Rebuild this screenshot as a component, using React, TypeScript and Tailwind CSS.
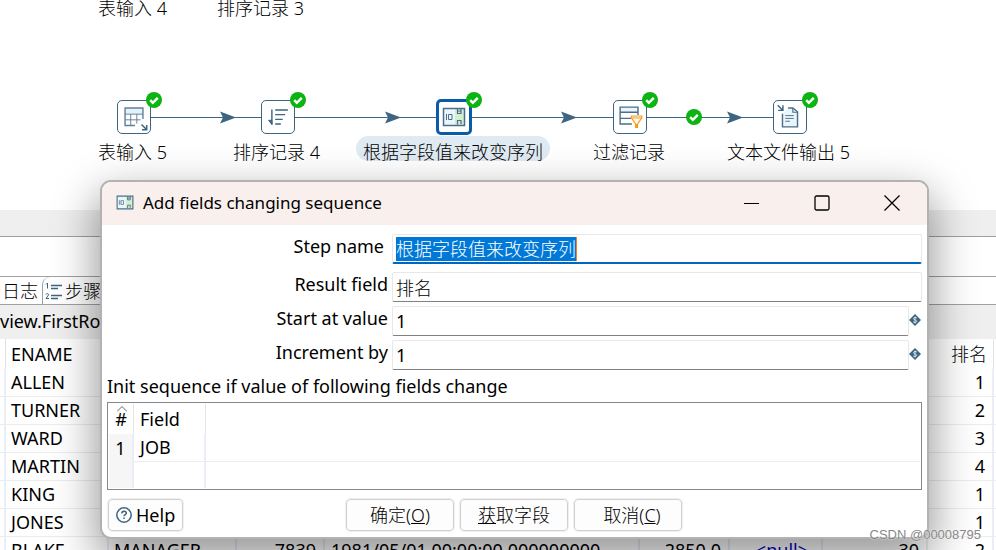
import React from "react";

const FONT = "font-['Noto_Sans','Noto_Sans_CJK_SC',sans-serif]";

function Check({ className }: { className?: string }) {
  return (
    <svg viewBox="0 0 16 16" className={`h-4 w-4 ${className ?? ""}`}>
      <circle cx="8" cy="8" r="8" fill="#0db312" />
      <path d="M4.2 8.2 6.8 10.8 11.8 5.8" fill="none" stroke="#fff" strokeWidth="2.4" />
    </svg>
  );
}

function TableInputIcon() {
  return (
    <svg viewBox="0 0 34 34" className="h-full w-full" fill="none" stroke="#5f7f9a">
      <path d="M8 8h18v6H8z" fill="#e3f1f8" stroke="none" />
      <path d="M18 26H7.5V7.500H26.500V19" strokeWidth="1.500" />
      <path d="M7.500 14H26.500M7.500 20H24M13.500 14V26M20 14V24" strokeWidth="1" />
      <path d="M25 25 30 30M30.500 25.500V30.500H25.500" stroke="#3d6480" strokeWidth="1.600" />
    </svg>
  );
}

function SortIcon() {
  return (
    <svg viewBox="0 0 34 34" className="h-full w-full" fill="none" stroke="#3d6480" strokeWidth="1.500">
      <path d="M10.500 9V25" />
      <path d="M7 20.500 10.500 25V20.500z" fill="#3d6480" strokeWidth="1" />
      <path d="M14 9.500H27.500M14 14.500H24.500M14 19.500H22M14 24.500H20" />
    </svg>
  );
}

function SequenceIcon({ className = "h-full w-full" }: { className?: string }) {
  return (
    <svg viewBox="0 0 24 20" className={className} fill="none" stroke="#4b6f8a">
      <path d="M1 1h12v18H1z" fill="#eaf6fb" stroke="none" />
      <path d="M13 1h10v18H13z" fill="#d5eed2" stroke="none" />
      <path d="M1.500 1.500H22.500V18.500H1.500z" strokeWidth="1.500" />
      <path d="M4.500 7V13M6.500 7.500H10V12.500H6.500z" />
      <path d="M15.500 2V6.500H19V2M15.500 4H19M15.500 17.500V13.500H19V17" strokeWidth="1.200" />
    </svg>
  );
}

function FilterIcon() {
  return (
    <svg viewBox="0 0 34 34" className="h-full w-full" fill="none">
      <path d="M7 7h19v5H7z" fill="#e9f4fa" />
      <path d="M19 24.500H6.500V6.500H25.500V15M6.500 12H25.500M6.500 18.500H18" stroke="#4b6f8a" strokeWidth="1.500" />
      <path d="M18.500 16H29.500V18L25 24.500V28H23V24.500L18.500 18z" fill="#fff6e4" stroke="#f59a1c" strokeWidth="1.200" />
      <path d="M23 24.500H25V28.500H23z" fill="#f59a1c" />
      <path d="M18.500 18H29.500" stroke="#f59a1c" />
    </svg>
  );
}

function TextOutIcon() {
  return (
    <svg viewBox="0 0 34 34" className="h-full w-full" fill="none" stroke="#4b6f8a">
      <path d="M9 13.500V27.500H25V11.500L20 7.500H15" fill="#eaf6fb" strokeWidth="1.500" />
      <path d="M20 7.500V12H25" strokeWidth="1.200" />
      <path d="M12 15.500H21M12 18.500H21M12 21.500H17" strokeWidth="1" />
      <path d="M4 4.500 9 9.500M9.500 4.500V10H4.500" stroke="#3d6480" strokeWidth="1.500" />
    </svg>
  );
}

const nodes = [
  { label: "表输入 5", box: "left-[117px]", text: "left-[98px]", icon: <TableInputIcon /> },
  { label: "排序记录 4", box: "left-[261px]", text: "left-[233px]", icon: <SortIcon /> },
  { label: "过滤记录", box: "left-[613px]", text: "left-[593px]", icon: <FilterIcon /> },
  { label: "文本文件输出 5", box: "left-[773px]", text: "left-[727px]", icon: <TextOutIcon /> },
];

function Canvas() {
  return (
    <section className="relative h-[210px] overflow-hidden text-lg leading-6 font-light whitespace-nowrap">
      <span className="absolute -top-1 left-[98px]">表输入 4</span>
      <span className="absolute -top-1 left-[217px]">排序记录 3</span>
      <svg viewBox="0 0 700 16" className="absolute top-[109px] left-[134px] h-4 w-[700px]">
        <path d="M0 8.500H656" stroke="#3d6480" />
        {[86, 251, 427, 593].map((x) => (
          <path key={x} d={`M${x} 2.500 L${x + 16} 8.500 L${x} 14.500 L${x + 3} 8.500z`} fill="#3d6480" />
        ))}
      </svg>
      {nodes.map((n) => (
        <React.Fragment key={n.label}>
          <div className={`absolute top-[100px] h-[34px] w-[34px] rounded-[5px] border border-[#3d6480] bg-white ${n.box}`}>
            {n.icon}
            <Check className="absolute -top-[9px] -right-[12px]" />
          </div>
          <span className={`absolute top-[140px] ${n.text}`}>{n.label}</span>
        </React.Fragment>
      ))}
      <div className="absolute top-[99px] left-[436px] h-9 w-9 rounded-[5px] border-[3px] border-[#0a5ca8] bg-white p-[3px]">
        <SequenceIcon />
        <Check className="absolute -top-[10px] -right-[13px]" />
      </div>
      <span className="absolute top-[136px] left-[356px] h-[25px] rounded-full bg-[#e0eaf3] px-[7px] pt-1">
        根据字段值来改变序列
      </span>
      <Check className="absolute top-[109px] left-[686px]" />
    </section>
  );
}

const rows = [
  ["ALLEN", "1"],
  ["TURNER", "2"],
  ["WARD", "3"],
  ["MARTIN", "4"],
  ["KING", "1"],
  ["JONES", "1"],
];

const cell = "border-r-2 border-b border-r-[#e9eef7] border-b-[#ececec] p-0";

function Results() {
  return (
    <table className="w-full table-fixed border-separate border-spacing-0 text-lg leading-[27px] whitespace-nowrap">
      <colgroup>
        <col className="w-[6px]" />
        <col className="w-[103px]" />
        <col className="w-[128px]" />
        <col className="w-[88px]" />
        <col />
        <col className="w-[90px]" />
        <col className="w-[93px]" />
        <col className="w-[105px]" />
        <col className="w-[66px]" />
        <col className="w-[2px]" />
      </colgroup>
      <thead>
        <tr className="h-[30px]">
          <th className="border-r border-[#e2e2e2] p-0" />
          <th className="p-0 pl-[5px] text-left font-normal">ENAME</th>
          <th colSpan={6} className="p-0" />
          <th className="border-r border-[#e2e2e2] p-0 pr-[6px] text-right font-light">排名</th>
          <th className="p-0" />
        </tr>
      </thead>
      <tbody>
        {rows.map(([name, rank]) => (
          <tr key={name} className="h-7">
            <td className={cell} />
            <td className={`${cell} pl-[5px]!`}>{name}</td>
            <td colSpan={6} className={cell} />
            <td className={`${cell} pr-[7px]! text-right`}>{rank}</td>
            <td className="border-b border-[#ececec] p-0" />
          </tr>
        ))}
        <tr className="h-7">
          <td className={cell} />
          <td className={`${cell} pl-[5px]!`}>BLAKE</td>
          <td className={`${cell} pl-[5px]!`}>MANAGER</td>
          <td className={`${cell} pr-[7px]! text-right`}>7839</td>
          <td className={`${cell} pl-[6px]!`}>1981/05/01 00:00:00.000000000</td>
          <td className={`${cell} pr-[7px]! text-right`}>2850.0</td>
          <td className={`${cell} pr-[13px]! text-right text-[#0000c8]`}>&lt;null&gt;</td>
          <td className={`${cell} pr-[7px]! text-right`}>30</td>
          <td className={`${cell} pr-[7px]! text-right`}>2</td>
          <td className="p-0" />
        </tr>
      </tbody>
    </table>
  );
}

function VarIcon() {
  return (
    <svg viewBox="0 0 12 12" className="h-3 w-3" fill="none">
      <path d="M6 0 12 6 6 12 0 6z" fill="#3d6480" />
      <path d="M8 4.200C7.400 3.200 4.500 3.200 4.500 4.700C4.500 6.200 7.700 5.600 7.700 7.300C7.700 8.800 4.700 8.800 4.100 7.700M6 2.500V9.500" stroke="#e4ecf2" strokeWidth=".9" />
    </svg>
  );
}

function Field({ id, label, value, variable }: { id: string; label: string; value: string; variable?: boolean }) {
  return (
    <div className="flex h-[30px] items-start">
      <label htmlFor={id} className="w-[281px] text-right text-lg leading-6">
        {label}
      </label>
      <input
        id={id}
        defaultValue={value}
        className={`ml-1 h-[30px] min-w-0 flex-1 rounded-[2px] border border-[#e8e8e8] border-b-[#808080] bg-white px-[3px] text-lg outline-none ${variable ? "" : "font-light"}`}
      />
      {variable && (
        <span className="mt-2 w-[13px]">
          <VarIcon />
        </span>
      )}
    </div>
  );
}

const button =
  "h-8 rounded-[4px] border border-[#d0d0d0] bg-[#fdfdfd] text-lg leading-6 outline-1 outline-[#f0f0f0]";

function Dialog() {
  return (
    <div
      role="dialog"
      aria-label="Add fields changing sequence"
      className="absolute top-[180px] right-[67px] left-[100px] flex h-[359px] flex-col overflow-hidden rounded-[11px] border-2 border-[#b2b2b2] bg-white shadow-[0_18px_44px_4px_rgba(0,0,0,0.4)]"
    >
      <header className="flex h-[43px] shrink-0 items-start bg-[#f9f0ee] pl-[14px]">
        <SequenceIcon className="mt-[13px] h-[15px] w-[18px]" />
        <h1 className="ml-[9px] flex-1 text-[17px] leading-[41px]">Add fields changing sequence</h1>
        <button aria-label="Minimize" className="grid h-[41px] w-[70px] place-items-center">
          <svg viewBox="0 0 16 16" className="h-4 w-4"><path d="M0 8.500H15" stroke="#000" /></svg>
        </button>
        <button aria-label="Maximize" className="grid h-[41px] w-[70px] place-items-center">
          <svg viewBox="0 0 16 16" className="h-4 w-4"><rect x="1" y="1" width="14" height="14" rx="1.500" fill="none" stroke="#000" strokeWidth="1.300" /></svg>
        </button>
        <button aria-label="Close" className="grid h-[41px] w-[70px] place-items-center">
          <svg viewBox="0 0 16 16" className="h-4 w-4"><path d="M.5.5 15.500 15.500M15.500.5.5 15.500" stroke="#000" strokeWidth="1.300" /></svg>
        </button>
      </header>
      <form className="flex flex-1 flex-col px-[5px] pt-[9px]" onSubmit={(e) => e.preventDefault()}>
        <div className="mb-2 flex h-[30px] items-start">
          <label htmlFor="step" className="w-[281px] pr-1 text-right text-lg leading-6">
            Step name
          </label>
          <div className="relative ml-1 flex-1">
            <input
              id="step"
              defaultValue="根据字段值来改变序列"
              className="h-[30px] w-full rounded-[2px] border border-b-2 border-[#e8e8e8] border-b-[#0067c0] px-[3px] text-lg font-light text-transparent outline-none"
            />
            <span aria-hidden="true" className="absolute top-[3px] left-1 h-6 border-r border-[#f08030] bg-[#0078d7] text-lg leading-6 font-light text-white">
              根据字段值来改变序列
            </span>
          </div>
        </div>
        <div className="flex flex-col gap-1">
          <Field id="result" label="Result field" value="排名" />
          <Field id="start" label="Start at value" value="1" variable />
          <Field id="increment" label="Increment by" value="1" variable />
        </div>
        <p className="mt-1 text-lg leading-6">Init sequence if value of following fields change</p>
        <div className="mt-1 h-[88px] border border-[#828790] p-px">
          <table className="w-full table-fixed border-separate border-spacing-0 text-lg leading-[27px]">
            <colgroup>
              <col className="w-[25px]" />
              <col className="w-[72px]" />
              <col />
            </colgroup>
            <thead>
              <tr className="h-[30px]">
                <th className="relative border-r border-[#e5e5e5] p-0 font-normal">
                  <svg viewBox="0 0 10 6" className="absolute top-0.5 left-2 h-1.5 w-2.5"><path d="M0 5.500 5 .5 10 5.500" fill="none" stroke="#666" /></svg>
                  #
                </th>
                <th className="border-r border-[#e5e5e5] p-0 pl-[6px] text-left font-normal">Field</th>
                <th className="p-0" />
              </tr>
            </thead>
            <tbody>
              <tr className="h-[28px]">
                <td className="border-r-2 border-[#e9eef7] bg-[#f6f6f6] p-0 text-center">1</td>
                <td className={`${cell} pl-[6px]!`}>JOB</td>
                <td className="border-b border-[#ececec] p-0" />
              </tr>
              <tr className="h-[26px]">
                <td className="border-r-2 border-[#e9eef7] bg-[#f6f6f6] p-0" />
                <td className="border-r-2 border-[#e9eef7] p-0" />
                <td className="p-0" />
              </tr>
            </tbody>
          </table>
        </div>
        <div className="mt-[9px] flex pl-px">
          <button className={`${button} flex w-[75px] items-center pl-[7px]`}>
            <svg viewBox="0 0 16 16" className="mr-1 h-4 w-4 shrink-0" fill="none" stroke="#3d6480" strokeWidth="1.500">
              <circle cx="8" cy="8" r="7.200" />
              <path d="M5.800 6.500C5.800 3.400 10.300 3.700 10.300 6.200C10.300 7.700 8 7.600 8 9.300M8 10.500V12" />
            </svg>
            Help
          </button>
          <div className="ml-[163px] flex gap-1.5 font-light">
            <button className={`${button} w-[108px]`}>确定(<u>O</u>)</button>
            <button className={`${button} w-[108px]`}><u>获</u>取字段</button>
            <button className={`${button} w-[108px] pl-2`}>取消(<u>C</u>)</button>
          </div>
        </div>
      </form>
    </div>
  );
}

export default function App() {
  return (
    <main className={`relative h-screen overflow-hidden bg-white text-black ${FONT}`}>
      <Canvas />
      <div className="h-[26px] bg-[#efefef]" />
      <div className="h-10 border-t border-[#a0a0a0]" />
      <nav className="flex h-[29px] items-stretch border-y border-[#a0a0a0] text-lg leading-7 font-light whitespace-nowrap">
        <button className="pr-1 pl-0.5">日志</button>
        <button className="flex items-center rounded-tl-[8px] border-l border-[#a0a0a0] pl-0.5">
          <svg viewBox="0 0 18 18" className="mr-0.5 h-[18px] w-[18px]" fill="none" stroke="#3d6480">
            <path d="M6 3.500H17M6 6.500H13M6 13.500H17M6 16.500H13" strokeWidth="1.400" />
            <path d="M1 2.500 2.500 1V6.500M1 12.500C1.500 11 4 11.500 3.500 13L1 16.500H4" />
          </svg>
          步骤度量
        </button>
      </nav>
      <div className="h-[34px] bg-[#efefef] text-lg leading-8">view.FirstRows.Label</div>
      <Results />
      <Dialog />
      <span className="absolute right-[15px] bottom-[7px] font-['Liberation_Sans',sans-serif] text-[13px] leading-4 text-[#888] [text-shadow:0_0_2px_#fff]">
        CSDN @00008795
      </span>
    </main>
  );
}
